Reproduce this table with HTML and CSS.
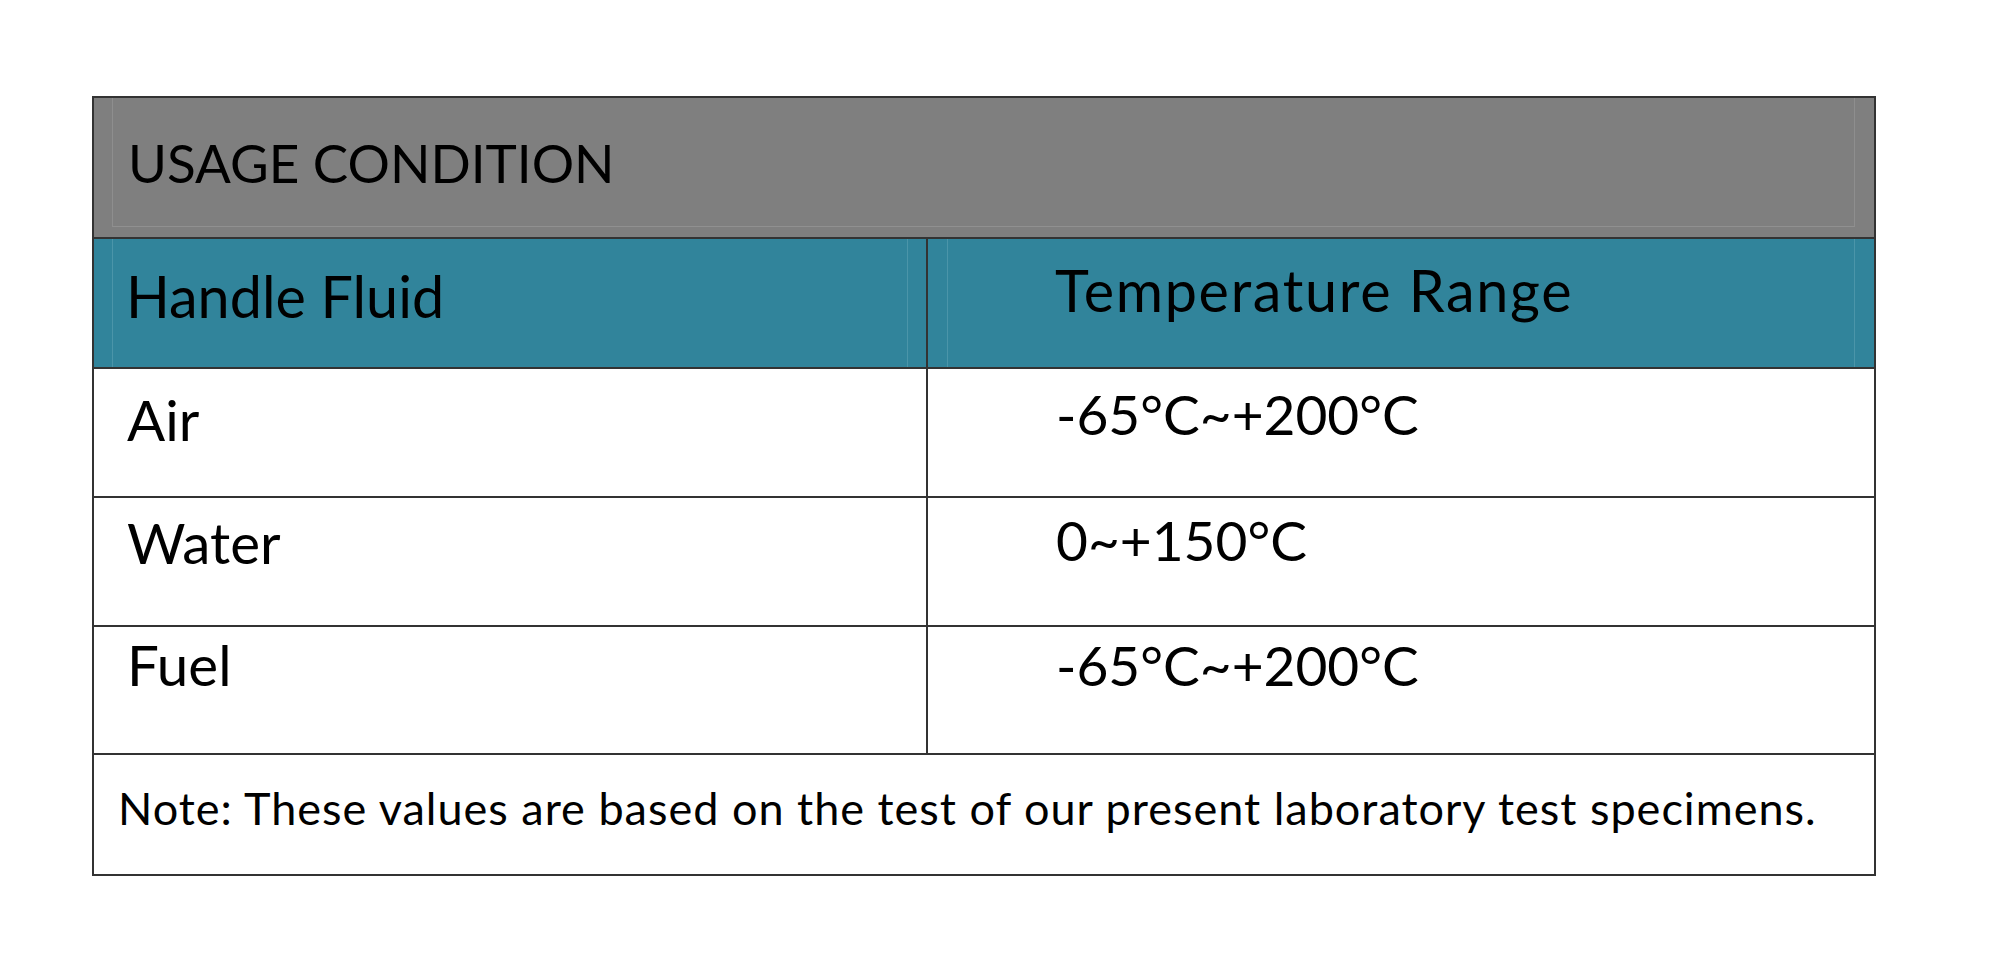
FILE: index.html
```html
<!DOCTYPE html>
<html lang="en">
<head>
<meta charset="utf-8">
<title>Usage Condition</title>
<link rel="stylesheet" href="styles.css">
</head>
<body>
<div class="page">
  <table class="spec">
    <colgroup>
      <col class="col-fluid">
      <col class="col-temp">
    </colgroup>
    <tr class="row-title">
      <td colspan="2" class="title-cell"><span class="cell-text">USAGE CONDITION</span></td>
    </tr>
    <tr class="row-head">
      <td class="head-cell head-left"><span class="cell-text">Handle Fluid</span></td>
      <td class="head-cell head-right"><span class="cell-text">Temperature Range</span></td>
    </tr>
    <tr class="row-data row-air">
      <td class="fluid">Air</td>
      <td class="temp">-65°C~+200°C</td>
    </tr>
    <tr class="row-data row-water">
      <td class="fluid">Water</td>
      <td class="temp">0~+150°C</td>
    </tr>
    <tr class="row-data row-fuel">
      <td class="fluid">Fuel</td>
      <td class="temp">-65°C~+200°C</td>
    </tr>
    <tr class="row-note">
      <td colspan="2" class="note">Note: These values are based on the test of our present laboratory test specimens.</td>
    </tr>
  </table>
</div>
</body>
</html>
```

FILE: styles.css
```css
html, body {
  margin: 0;
  padding: 0;
  background: #ffffff;
}

.page {
  padding: 96px 0 0 92px;
  font-family: Lato, "Liberation Sans", sans-serif;
  color: #000;
}

.spec {
  border-collapse: collapse;
  table-layout: fixed;
  width: 1782px;
}

.col-fluid { width: 834px; }
.col-temp { width: 948px; }

.spec td {
  border: 2px solid #333;
  vertical-align: top;
  padding: 0;
  line-height: 1.2;
  position: relative;
  box-sizing: border-box;
}

.cell-text {
  position: relative;
  z-index: 1;
}

/* title row */
.row-title td { height: 141px; }
.title-cell {
  background: #7f7f7f;
  font-size: 53px;
  padding: 33px 0 0 34px !important;
}
.title-cell::after {
  content: "";
  position: absolute;
  left: 18px;
  right: 19px;
  top: 0;
  bottom: 10px;
  border-left: 1px solid #8e8e8e;
  border-right: 1px solid #8e8e8e;
  border-bottom: 1px solid #909090;
}

/* teal header row */
.row-head td { height: 130px; }
.head-cell {
  background: #31849b;
  font-size: 57.5px;
}
.head-cell::after {
  content: "";
  position: absolute;
  top: 0;
  bottom: 0;
  border-left: 1px solid #4b95a9;
  border-right: 1px solid #4b95a9;
}
.head-left { padding: 22px 0 0 32px !important; }
.head-left::after { left: 18px; right: 18px; }
.head-right { padding: 16px 0 0 127px !important; letter-spacing: 1.7px; }
.head-right::after { left: 19px; right: 19px; }

/* data rows */
.row-data td { height: 129px; font-size: 55px; }
.row-fuel td { height: 128px; }
.fluid { padding-left: 33px !important; }
.temp { padding-left: 128px !important; }
.row-data .fluid { font-size: 56.5px; }

.row-air .fluid { padding-top: 17px !important; }
.row-air .temp { padding-top: 12px !important; }
.row-water .fluid { padding-top: 11px !important; }
.row-water .temp { padding-top: 9px !important; }
.row-fuel .fluid { padding-top: 4px !important; }
.row-fuel .temp { padding-top: 5px !important; }

/* note row */
.row-note td { height: 121px; }
.note {
  font-size: 45px;
  letter-spacing: 1px;
  padding: 26px 0 0 24px !important;
  white-space: nowrap;
}
```
